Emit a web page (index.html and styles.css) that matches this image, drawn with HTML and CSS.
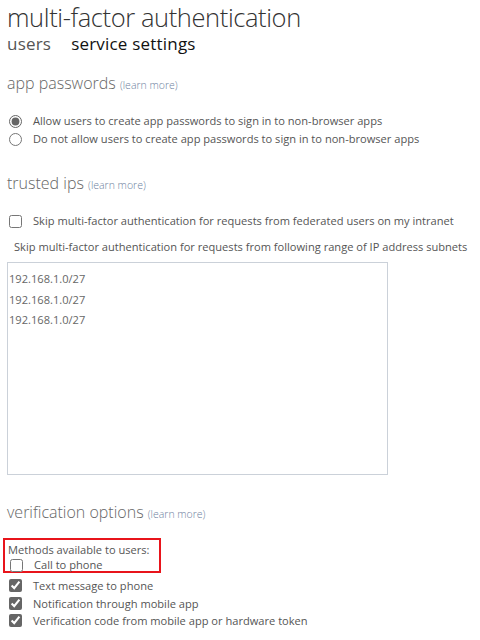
FILE: index.html
```html
<!DOCTYPE html>
<html>
<head>
  <title>multi-factor authentication</title>
  <meta charset="UTF-8">
  <link rel="stylesheet" href="styles.css">
</head>
<body>
  <div class="page">
    <h1 class="title">multi-factor authentication</h1>
    <div class="tabs">
      <span class="tab">users</span>
      <span class="tab active">service settings</span>
    </div>

    <section class="section first">
      <h2 class="heading">app passwords <a class="learn">(learn more)</a></h2>
      <div class="options">
        <label class="option"><input type="radio" name="apppw" checked> Allow users to create app passwords to sign in to non-browser apps</label>
        <label class="option"><input type="radio" name="apppw"> Do not allow users to create app passwords to sign in to non-browser apps</label>
      </div>
    </section>

    <section class="section">
      <h2 class="heading">trusted ips <a class="learn">(learn more)</a></h2>
      <label class="option single"><input type="checkbox"> Skip multi-factor authentication for requests from federated users on my intranet</label>
      <p class="note">Skip multi-factor authentication for requests from following range of IP address subnets</p>
      <div class="ipbox">
        <div class="ip">192.168.1.0/27</div>
        <div class="ip">192.168.1.0/27</div>
        <div class="ip">192.168.1.0/27</div>
      </div>
    </section>

    <section class="section">
      <h2 class="heading">verification options <a class="learn">(learn more)</a></h2>
      <div class="highlight">
        <div class="methods-label">Methods available to users:</div>
        <label class="option call"><input type="checkbox"> Call to phone</label>
      </div>
      <div class="methods">
        <label class="option method"><input type="checkbox" checked> Text message to phone</label>
        <label class="option method"><input type="checkbox" checked> Notification through mobile app</label>
        <label class="option method"><input type="checkbox" checked> Verification code from mobile app or hardware token</label>
      </div>
    </section>
  </div>
</body>
</html>
```
FILE: styles.css
```css
body {
  margin: 0;
  font-family: "Open Sans", "Noto Sans", sans-serif;
  color: #555;
  background: #fff;
}
.page {
  padding: 0 7px;
}
.title {
  margin: 0;
  font-size: 25.5px;
  font-weight: 300;
  line-height: 34px;
  color: #333;
  letter-spacing: -0.4px;
}
.tabs {
  display: flex;
  gap: 20px;
  font-size: 17px;
  line-height: 20px;
  letter-spacing: 0.2px;
}
.tab {
  color: #555;
}
.tab.active {
  color: #111;
}
.section {
  margin-top: 14px;
}
.section.first {
  margin-top: 18px;
}
.heading {
  margin: 0;
  font-size: 16px;
  font-weight: 300;
  line-height: 22px;
  color: #666;
}
.learn {
  font-size: 10.5px;
  color: #6e7fa0;
}
.options {
  margin-top: 16px;
  margin-bottom: 24px;
}
.option {
  display: flex;
  align-items: center;
  font-size: 11.1px;
  line-height: 18px;
  color: #555;
  white-space: nowrap;
}
.option input {
  margin: 0 11px 0 2px;
  width: 13px;
  height: 13px;
  accent-color: #666;
}
.single {
  margin-top: 16px;
}
.note {
  margin: 9px 0 7px 7px;
  font-size: 11.1px;
  line-height: 16px;
  white-space: nowrap;
}
.ipbox {
  width: 381px;
  height: 213px;
  border: 1px solid #cbd1d9;
  padding-top: 6px;
  box-sizing: border-box;
  margin-bottom: 26px;
}
.ip {
  font-size: 11.1px;
  line-height: 20.7px;
  color: #666;
  padding-left: 1px;
}
.highlight {
  margin: 13px 0 0 -4px;
  width: 151px;
  height: 29px;
  border: 2px solid #e8141b;
  padding: 2px 0 0 3px;
}
.methods-label {
  font-size: 11.1px;
  line-height: 15px;
}
.call {
  line-height: 16px;
}
.methods {
  margin-top: 4px;
}
.method {
  line-height: 17.5px;
}
```
